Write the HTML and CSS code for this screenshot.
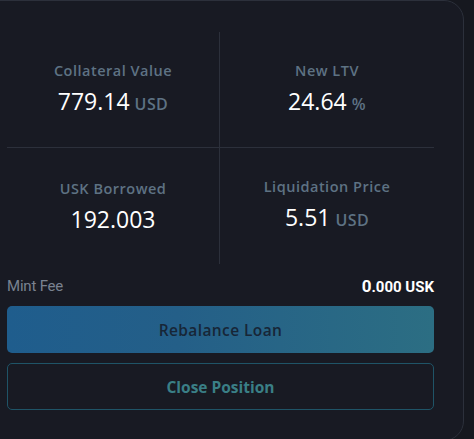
FILE: index.html
```html
<!DOCTYPE html>
<html>
<head>
<meta charset="utf-8">
<link rel="stylesheet" href="styles.css">
</head>
<body>
<div class="card">
  <div class="stats">
    <div class="cell c1">
      <div class="label">Collateral Value</div>
      <div class="value">779.14<span class="unit">USD</span></div>
    </div>
    <div class="cell c2">
      <div class="label">New LTV</div>
      <div class="value">24.64<span class="unit">%</span></div>
    </div>
    <div class="cell c3">
      <div class="label">USK Borrowed</div>
      <div class="value">192.003</div>
    </div>
    <div class="cell c4">
      <div class="label">Liquidation Price</div>
      <div class="value">5.51<span class="unit">USD</span></div>
    </div>
  </div>
  <div class="fee">
    <span class="fee-label">Mint Fee</span>
    <span class="fee-value"><span class="big">0</span>.000 USK</span>
  </div>
  <div class="btn primary">Rebalance Loan</div>
  <div class="btn outline">Close Position</div>
</div>
</body>
</html>
```
FILE: styles.css
```css
html, body {
  margin: 0;
  padding: 0;
  background: #16181f;
  width: 474px;
  height: 439px;
  overflow: hidden;
}
.card {
  box-sizing: border-box;
  margin-left: -20px;
  width: 484px;
  height: 441px;
  background: #181a23;
  border: 1px solid #2c303b;
  border-radius: 20px;
  padding: 31px 29px 0 26px;
  font-family: "Open Sans", sans-serif;
}
.stats {
  display: grid;
  grid-template-columns: 213px 214px;
  grid-template-rows: 116px 116px;
}
.cell {
  display: flex;
  flex-direction: column;
  align-items: center;
  justify-content: center;
  gap: 7px;
  border-color: #2c303b;
  border-style: solid;
  border-width: 0;
}
.c1 { border-right-width: 1px; border-bottom-width: 1px; }
.c2 { border-bottom-width: 1px; }
.c3 { border-right-width: 1px; }
.label {
  font-size: 14.5px;
  font-weight: 600;
  color: #5e7283;
  line-height: 18px;
  letter-spacing: 0.5px;
}
.value {
  font-size: 23px;
  color: #ffffff;
  line-height: 28px;
  letter-spacing: 0;
}
.unit {
  font-size: 16px;
  font-weight: 600;
  color: #5e7283;
  margin-left: 5px;
  letter-spacing: 0.4px;
}
.fee {
  display: flex;
  justify-content: space-between;
  align-items: center;
  height: 22px;
  margin-top: 11px;
}
.fee-label {
  font-family: "Roboto", sans-serif;
  font-size: 15px;
  color: #7a8290;
  letter-spacing: -0.2px;
}
.fee-value {
  font-family: "Roboto", sans-serif;
  font-weight: 700;
  font-size: 15px;
  color: #ffffff;
}
.fee-value .big {
  font-size: 17px;
}
.btn {
  display: flex;
  align-items: center;
  justify-content: center;
  box-sizing: border-box;
  width: 427px;
  height: 47px;
  border-radius: 5px;
  font-family: "Open Sans", sans-serif;
  font-size: 15.5px;
  cursor: pointer;
}
.primary {
  margin-top: 9px;
  background: linear-gradient(90deg, #1f5d8d 0%, #245f88 40%, #2c6e83 100%);
  color: #172637;
  font-weight: 600;
  letter-spacing: 0.4px;
}
.outline {
  margin-top: 10px;
  border: 1px solid #1f5467;
  background: #181a23;
  color: #3a7f86;
  font-weight: 700;
}
```
